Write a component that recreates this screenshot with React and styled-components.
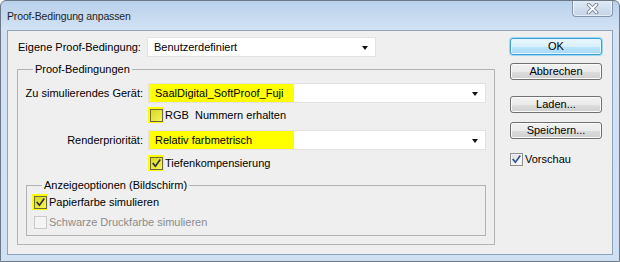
import React from "react";
import styled, { createGlobalStyle, css } from "styled-components";

const GlobalStyle = createGlobalStyle`
  html, body {
    margin: 0;
    padding: 0;
    background: #ffffff;
  }
  body {
    font-family: "Liberation Sans", Arial, sans-serif;
    font-size: 11px;
    color: #000;
  }
`;

const Window = styled.div`
  width: 620px;
  height: 262px;
  box-sizing: border-box;
  border: 1px solid #6b7888;
  border-radius: 6px 6px 0 0;
  background: linear-gradient(180deg, #b9d1eb 0px, #d3e3f4 30px, #cfe0f3 100%);
  display: flex;
  flex-direction: column;
  overflow: hidden;
`;

const TitleBar = styled.div`
  height: 29px;
  display: flex;
  align-items: flex-start;
  justify-content: space-between;
  padding-left: 6px;
`;

const Title = styled.span`
  font-size: 10.5px;
  letter-spacing: -0.15px;
  line-height: 12px;
  margin-top: 9px;
  color: #1e1e1e;
`;

const CloseButton = styled.div`
  width: 41px;
  height: 17px;
  margin-right: 6px;
  margin-top: -1px;
  box-sizing: border-box;
  border: 1px solid #8596ac;
  border-top: none;
  border-radius: 0 0 4px 4px;
  background: linear-gradient(180deg, #e3ecf6 0%, #d2dfee 50%, #c3d4e8 100%);
  box-shadow: inset 0 0 0 1px rgba(255, 255, 255, 0.6);
  display: flex;
  align-items: center;
  justify-content: center;
`;

const Client = styled.div`
  flex: 1;
  margin: 0 6px 6px 6px;
  border: 1px solid #8ea3bc;
  background: #efefef;
  display: flex;
  padding: 6px 9px 0 9px;
`;

const Main = styled.div`
  width: 478px;
  display: flex;
  flex-direction: column;
`;

const Side = styled.div`
  width: 92px;
  margin-left: 15px;
  padding-top: 1px;
  display: flex;
  flex-direction: column;
`;

const FieldRow = styled.div`
  display: grid;
  grid-template-columns: 124px ${(p) => p.$selectWidth || "1fr"};
  column-gap: 5px;
  align-items: center;
  margin-left: 1px;
  margin-top: ${(p) => p.$top || 0}px;
`;

const Label = styled.label`
  text-align: ${(p) => (p.$right ? "right" : "left")};
  white-space: nowrap;
`;

const Select = styled.div`
  position: relative;
  height: 20px;
  box-sizing: border-box;
  border: 1px solid #e2e2e2;
  background: #ffffff;
  display: flex;
  align-items: stretch;
`;

const SelectValue = styled.span`
  display: flex;
  align-items: center;
  padding-left: 6px;
  width: ${(p) => (p.$marked ? "139px" : "auto")};
  ${(p) =>
    p.$marked &&
    css`
      background: #ffff00;
    `}
`;

const Arrow = styled.span`
  position: absolute;
  right: 7px;
  top: 8px;
  width: 0;
  height: 0;
  border-left: 3.5px solid transparent;
  border-right: 3.5px solid transparent;
  border-top: 4px solid #111;
`;

const Group = styled.fieldset`
  margin: ${(p) => (p.$inner ? "7px 0 0 8px" : "5px 0 0 0")};
  padding: ${(p) => (p.$inner ? "2px 0 5px 5px" : "7px 8px 8px 0")};
  border: 1px solid #b3b3b3;
  min-inline-size: 0;
  display: flex;
  flex-direction: column;
  gap: ${(p) => (p.$inner ? "4px" : "0")};
`;

const Legend = styled.legend`
  margin-left: ${(p) => p.$offset}px;
  padding: 0 2px;
  line-height: 14px;
  font-size: 11px;
`;

const CheckRow = styled.div`
  display: flex;
  align-items: center;
  height: 16px;
  margin: ${(p) => p.$margin || "0"};
  color: ${(p) => (p.$disabled ? "#8c8c8c" : "#000")};
  white-space: pre;
`;

const Highlight = styled.span`
  width: 16px;
  height: 16px;
  display: flex;
  align-items: center;
  justify-content: center;
  margin-right: 1px;
  background: ${(p) => (p.$marked ? "#ffff00" : "transparent")};
`;

const Box = styled.span`
  width: 13px;
  height: 13px;
  box-sizing: border-box;
  border: 1px solid ${(p) => (p.$disabled ? "#c9c9c9" : p.$marked ? "#6b6b3a" : "#8e8f8f")};
  background: ${(p) =>
    p.$disabled
      ? "#f4f4f4"
      : p.$marked
      ? "linear-gradient(135deg, #d8d820 0%, #f4f460 100%)"
      : "linear-gradient(135deg, #dcdcdc 0%, #ffffff 100%)"};
  box-shadow: ${(p) =>
    p.$marked || p.$disabled ? "none" : "inset 0 0 0 1px #f4f4f4"};
  display: flex;
  align-items: center;
  justify-content: center;
`;

const Button = styled.button`
  height: 17px;
  width: 92px;
  box-sizing: border-box;
  padding: 0;
  font-family: "Liberation Sans", Arial, sans-serif;
  font-size: 11px;
  line-height: 15px;
  color: #000;
  border-radius: 3px;
  margin-top: ${(p) => p.$gap || 0}px;
  border: 1px solid ${(p) => (p.$primary ? "#3c9fd6" : "#707070")};
  background: ${(p) =>
    p.$primary
      ? "linear-gradient(180deg, #eaf6fd 0%, #d9f0fc 50%, #bee6fd 51%, #a7d9f5 100%)"
      : "linear-gradient(180deg, #f2f2f2 0%, #ebebeb 50%, #dddddd 51%, #cfcfcf 100%)"};
  box-shadow: ${(p) =>
    p.$primary
      ? "0 0 0 1px #9ad8f6, inset 0 0 0 1px #e5f6fe"
      : "inset 0 0 0 1px #fbfbfb"};
`;

const Check = ({ color = "#2d2d2d" }) => (
  <svg width="9" height="9" viewBox="0 0 9 9">
    <path
      d="M1.2 4.6 L3.4 7.2 L7.8 1.2"
      fill="none"
      stroke={color}
      strokeWidth="1.6"
      strokeLinecap="square"
    />
  </svg>
);

const Checkbox = ({ checked, marked, disabled, color, children, margin }) => (
  <CheckRow $disabled={disabled} $margin={margin}>
    <Highlight $marked={marked}>
      <Box $marked={marked} $disabled={disabled}>
        {checked && <Check color={color} />}
      </Box>
    </Highlight>
    {children}
  </CheckRow>
);

const Dropdown = ({ value, marked }) => (
  <Select>
    <SelectValue $marked={marked}>{value}</SelectValue>
    <Arrow />
  </Select>
);

const App = () => (
  <>
    <GlobalStyle />
    <Window>
      <TitleBar>
        <Title>Proof-Bedingung anpassen</Title>
        <CloseButton>
          <svg width="13" height="11" viewBox="0 0 13 11">
            <path
              d="M2.5 1.5 L10.5 9.5 M10.5 1.5 L2.5 9.5"
              stroke="#6f7f93"
              strokeWidth="3.6"
              strokeLinecap="round"
            />
            <path
              d="M2.5 1.5 L10.5 9.5 M10.5 1.5 L2.5 9.5"
              stroke="#ffffff"
              strokeWidth="1.8"
              strokeLinecap="round"
            />
          </svg>
        </CloseButton>
      </TitleBar>
      <Client>
        <Main>
          <FieldRow $selectWidth="229px">
            <Label>Eigene Proof-Bedingung:</Label>
            <Dropdown value="Benutzerdefiniert" />
          </FieldRow>
          <Group>
            <Legend $offset={15}>Proof-Bedingungen</Legend>
            <FieldRow>
              <Label $right>Zu simulierendes Gerät:</Label>
              <Dropdown value="SaalDigital_SoftProof_Fuji" marked />
            </FieldRow>
            <FieldRow>
              <span />
              <Checkbox marked margin="4px 0 0 0">
                RGB  Nummern erhalten
              </Checkbox>
            </FieldRow>
            <FieldRow $top={7}>
              <Label $right>Renderpriorität:</Label>
              <Dropdown value="Relativ farbmetrisch" marked />
            </FieldRow>
            <FieldRow>
              <span />
              <Checkbox checked marked margin="5px 0 0 0">
                Tiefenkompensierung
              </Checkbox>
            </FieldRow>
            <Group $inner>
              <Legend $offset={10}>Anzeigeoptionen (Bildschirm)</Legend>
              <Checkbox checked marked>
                Papierfarbe simulieren
              </Checkbox>
              <Checkbox disabled>Schwarze Druckfarbe simulieren</Checkbox>
            </Group>
          </Group>
        </Main>
        <Side>
          <Button $primary>OK</Button>
          <Button $gap={8}>Abbrechen</Button>
          <Button $gap={16}>Laden...</Button>
          <Button $gap={9}>Speichern...</Button>
          <Checkbox checked color="#2f4f8f" margin="12px 0 0 -2px">
            Vorschau
          </Checkbox>
        </Side>
      </Client>
    </Window>
  </>
);

export default App;
